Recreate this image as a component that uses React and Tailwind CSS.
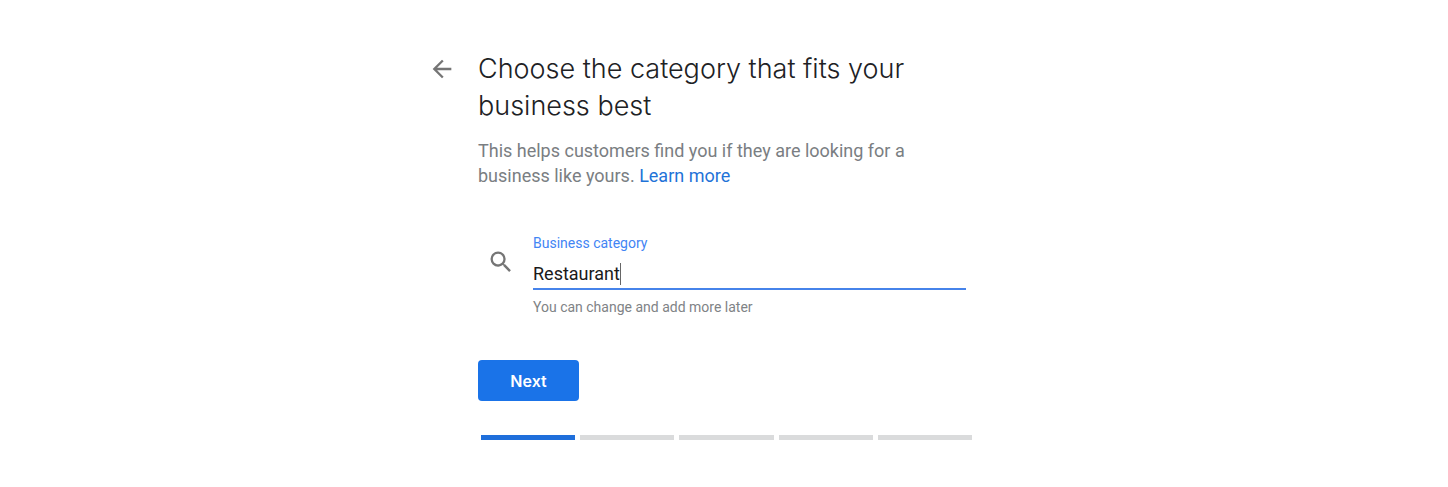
import React, { useState } from 'react';
import { MdArrowBack, MdSearch } from 'react-icons/md';

const TOTAL_STEPS = 5;

const StepProgress = ({ current }) => (
  <div className="flex gap-[5px] pl-[3px]">
    {Array.from({ length: TOTAL_STEPS }, (_, i) => (
      <div
        key={i}
        className={`h-[5px] flex-1 ${i < current ? 'bg-[#1f6fdb]' : 'bg-[#dadbdc]'}`}
      />
    ))}
  </div>
);

const CategoryField = ({ value, onChange }) => (
  <div className="flex pl-[9px] pr-[6px]">
    <MdSearch className="mt-[15px] h-7 w-7 shrink-0 text-[#757575]" />
    <div className="ml-[18px] min-w-0 flex-1">
      <label htmlFor="category" className="block text-[14px] leading-[20px] text-[#4285f4]">
        Business category
      </label>
      <div className="mt-[9px] flex items-center border-b-2 border-[#4683ea] pb-[2px]">
        <input
          id="category"
          type="text"
          value={value}
          onChange={(e) => onChange(e.target.value)}
          aria-describedby="category-hint"
          className="field-sizing-content max-w-full text-[18px] leading-[24px] text-[#1a1a1a] caret-transparent outline-none"
        />
        <span className="h-[22px] w-px bg-[#666666]" />
      </div>
      <p id="category-hint" className="mt-[7px] text-[14px] leading-[20px] text-[#808386]">
        You can change and add more later
      </p>
    </div>
  </div>
);

export default function App() {
  const [category, setCategory] = useState('Restaurant');

  return (
    <div className="bg-white px-4 py-[50px] font-['Roboto',sans-serif]">
      <main className="mx-auto flex max-w-[592px] items-start gap-[22px]">
        <button type="button" aria-label="Back" className="mt-[5px] shrink-0 text-[#757575]">
          <MdArrowBack className="h-7 w-7" />
        </button>
        <form className="max-w-[494px] flex-1" onSubmit={(e) => e.preventDefault()}>
          <h1 className="font-['Inter',sans-serif] text-[27px] leading-[37px] font-[350] text-[#202124]">
            Choose the category that fits your business best
          </h1>
          <p className="mt-[14px] max-w-[460px] text-[18px] leading-[25px] text-[#7a7e82]">
            This helps customers find you if they are looking for a business like yours.{' '}
            <a href="#learn-more" className="inline-block text-[#1f73d8]">Learn more</a>
          </p>
          <div className="mt-[45px]">
            <CategoryField value={category} onChange={setCategory} />
          </div>
          <button
            type="submit"
            className="mt-[43px] mb-[34px] block h-[41px] w-[101px] rounded bg-[#1a73e8] font-['Inter',sans-serif] text-[16px] font-semibold text-white"
          >
            Next
          </button>
          <StepProgress current={1} />
        </form>
      </main>
    </div>
  );
}
